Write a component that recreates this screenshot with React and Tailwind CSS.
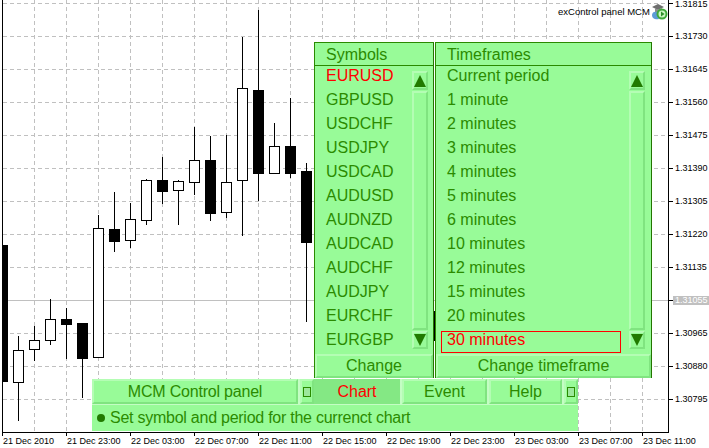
import React from 'react';

const symbols = ['EURUSD', 'GBPUSD', 'USDCHF', 'USDJPY', 'USDCAD', 'AUDUSD', 'AUDNZD', 'AUDCAD', 'AUDCHF', 'AUDJPY', 'EURCHF', 'EURGBP'];
const timeframes = ['Current period', '1 minute', '2 minutes', '3 minutes', '4 minutes', '5 minutes', '6 minutes', '10 minutes', '12 minutes', '15 minutes', '20 minutes', '30 minutes'];
const prices = ['1.31815', '1.31730', '1.31645', '1.31560', '1.31475', '1.31390', '1.31305', '1.31220', '1.31135', '1.31055', '1.30965', '1.30880', '1.30795'];
const times = ['21 Dec 2010', '21 Dec 23:00', '22 Dec 03:00', '22 Dec 07:00', '22 Dec 11:00', '22 Dec 15:00', '22 Dec 19:00', '22 Dec 23:00', '23 Dec 03:00', '23 Dec 07:00', '23 Dec 11:00'];

// x, wick top, wick bottom, body top, body bottom, filled
const candles = [
  [18, 336, 421, 350, 382, false],
  [34, 326, 361, 340, 349, false],
  [50, 299, 345, 319, 340, false],
  [66, 308, 359, 319, 324, true],
  [82, 323, 398, 323, 358, true],
  [98, 215, 358, 228, 357, false],
  [114, 192, 252, 229, 241, true],
  [130, 203, 248, 219, 240, false],
  [146, 179, 225, 180, 220, false],
  [162, 157, 204, 180, 191, true],
  [178, 180, 225, 181, 190, false],
  [194, 127, 195, 160, 182, false],
  [210, 136, 221, 160, 213, true],
  [226, 135, 218, 182, 212, false],
  [242, 37, 236, 88, 180, false],
  [258, 10, 201, 90, 173, true],
  [274, 123, 173, 146, 173, false],
  [290, 98, 178, 146, 173, true],
  [306, 163, 322, 171, 242, true],
];

const raised = 'border-2 border-t-[#b4fdb4] border-l-[#b4fdb4] border-r-[#80e480] border-b-[#80e480]';

const Chart = () => {
  const rows = prices.map((_, i) => 3 + i * 33);
  const cols = Array.from({ length: 20 }, (_, i) => 34 + i * 32);
  const ticks = times.map((_, i) => 2 + i * 64);

  return (
    <svg width="673" height="436" className="block shrink-0" shapeRendering="crispEdges">
      {rows.map((y) =>
        y === 300 ? (
          <line key={y} x1="3" x2="668" y1="300.5" y2="300.5" stroke="#c0c0c0" />
        ) : (
          <line key={y} x1="3" x2="668" y1={y + 0.5} y2={y + 0.5} stroke="#c0c0c0" strokeDasharray="4 3" />
        )
      )}
      {cols.map((x) => (
        <line key={x} x1={x + 0.5} x2={x + 0.5} y1="0" y2="432" stroke="#c0c0c0" strokeDasharray="4 3" />
      ))}
      <rect x="2" y="245" width="6" height="137" fill="#000" />
      <rect x="434" y="311" width="1" height="30" fill="#000" />
      {candles.map(([x, high, low, top, bottom, filled]) => (
        <g key={x}>
          <line x1={x + 0.5} x2={x + 0.5} y1={high} y2={low} stroke="#000" />
          {filled ? (
            <rect x={x - 5} y={top} width="11" height={bottom - top + 1} fill="#000" />
          ) : (
            <rect x={x - 4.5} y={top + 0.5} width="10" height={bottom - top} fill="#fff" stroke="#000" />
          )}
        </g>
      ))}
      <line x1="2.5" x2="2.5" y1="0" y2="436" stroke="#000" />
      <line x1="668.5" x2="668.5" y1="0" y2="433" stroke="#000" />
      <line x1="2" x2="669" y1="432.5" y2="432.5" stroke="#000" />
      {rows.map((y) => (
        <line key={y} x1="669" x2="673" y1={y + 0.5} y2={y + 0.5} stroke="#000" />
      ))}
      {ticks.map((x) => (
        <line key={x} x1={x + 0.5} x2={x + 0.5} y1="433" y2="436" stroke="#000" />
      ))}
    </svg>
  );
};

const Arrow = ({ down }) => (
  <svg width="12" height="12" viewBox="0 0 12 12" className="block">
    <polygon points={down ? '0,0 12,0 6,12' : '6,0 12,12 0,12'} fill="#217a00" />
  </svg>
);

const ScrollBar = () => (
  <div className="w-4 mt-[5px] shrink-0 flex flex-col gap-[1px] h-[278px]">
    <div className={`h-[19px] flex items-center justify-center ${raised}`}>
      <Arrow />
    </div>
    <div className={`flex-1 ${raised}`}></div>
    <div className={`h-[18px] flex items-center justify-center ${raised}`}>
      <Arrow down />
    </div>
  </div>
);

const ListPanel = ({ title, items, selected, boxed, action, width, gutter }) => (
  <div className={`${width} h-[336px] flex flex-col bg-[#98fb98] border border-[#2a8a00] border-r-[#237500] border-b-[#237500]`}>
    <div className="h-[23px] shrink-0 pl-[11px] leading-[23px] border-b border-[#2a8a00]">{title}</div>
    <div className="h-[288px] shrink-0 flex">
      <ul className="flex-1 -mt-[2px]">
        {items.map((item) => (
          <li key={item} className={`relative h-6 leading-6 pl-[11px] ${item === selected ? 'text-[#ff0000]' : ''}`}>
            {item}
            {boxed && item === selected && (
              <span className="absolute left-[5px] top-[3px] w-[180px] h-[22px] border border-[#ff0000]"></span>
            )}
          </li>
        ))}
      </ul>
      <ScrollBar />
      <div className={`${gutter} shrink-0`}></div>
    </div>
    <button className={`flex-1 text-center leading-[20px] ${raised}`}>{action}</button>
  </div>
);

const BarButton = ({ children, width, pressed, className = '' }) => (
  <button
    className={`${width} h-[25px] shrink-0 flex items-center justify-center pt-[1px] ${
      pressed ? 'bg-[#84e884] text-[#ff0000]' : `bg-[#98fb98] ${raised}`
    } ${className}`}
  >
    {children}
  </button>
);

const Square = () => <span className="block w-[8px] h-[10px] border border-[#2a8a00] bg-[#9ce89c]"></span>;

export default function App() {
  return (
    <div className="relative w-[709px] h-[448px] overflow-hidden bg-white font-['Liberation_Sans',sans-serif] text-black">
      <div className="flex h-[436px]">
        <Chart />
        <div className="-mt-[13px] text-[9px]">
          {prices.map((price) => (
            <div key={price} className="h-[33px] flex items-center first:pt-[2px]">
              <span className={`pl-[2px] w-[36px] h-[9px] leading-[9px] ${price === '1.31055' ? 'bg-[#c0c0c0] text-white' : ''}`}>{price}</span>
            </div>
          ))}
        </div>
      </div>
      <div className="flex pl-[3px] text-[9px] leading-[11px]">
        {times.map((time) => (
          <div key={time} className="w-16 shrink-0 whitespace-nowrap">{time}</div>
        ))}
      </div>

      <div className="absolute top-[3px] left-[558px] flex items-center gap-[2px] text-[9.5px] leading-[16px]">
        <span className="w-[91px] whitespace-nowrap">exControl panel MCM</span>
        <svg width="17" height="17" viewBox="0 0 17 17">
          <polygon points="1,4 7,1 13,4 7,7" fill="#6f6f6f" />
          <path d="M4 5v4c2 2 5 2 7 0V5l-4 2z" fill="#8c8c8c" />
          <path d="M1 12c0-3 3-4 5-3l2 7c-3 1-7 0-7-4z" fill="#5d9bd6" />
          <circle cx="11" cy="11" r="5.5" fill="#3fa83a" />
          <circle cx="11" cy="11" r="3.5" fill="#c9f5c0" />
          <polygon points="10,8.5 13.5,11 10,13.5" fill="#2f8f2a" />
        </svg>
      </div>

      <div className="absolute left-[314px] top-[42px] flex gap-[1px] text-base text-[#2b8b00]">
        <ListPanel title="Symbols" items={symbols} selected="EURUSD" action="Change" width="w-[120px]" gutter="w-[5px]" />
        <ListPanel title="Timeframes" items={timeframes} selected="30 minutes" boxed action="Change timeframe" width="w-[217px]" gutter="w-[6px]" />
      </div>

      <div className="absolute left-[92px] top-[379px] w-[486px] h-[52px] flex flex-col bg-[#c4fdc4] text-base text-[#2b8b00]">
        <div className="flex h-[26px] gap-[2px] shrink-0">
          <BarButton width="w-[206px]"><span className="tracking-[-0.2px]">MCM Control panel</span></BarButton>
          <BarButton width="w-[14px]"><Square /></BarButton>
          <BarButton width="w-[86px]" pressed className="-ml-[2px]">Chart</BarButton>
          <BarButton width="w-[85px]">Event</BarButton>
          <BarButton width="w-[73px]">Help</BarButton>
          <BarButton width="w-[14px]"><Square /></BarButton>
        </div>
        <div className="flex-1 flex items-center gap-[5px] pl-[5px] bg-[#98fb98]">
          <span className="w-[8px] h-[8px] rounded-full bg-[#217a00] shrink-0"></span>
          <span className="tracking-[-0.25px]">Set symbol and period for the currenct chart</span>
        </div>
      </div>
    </div>
  );
}
